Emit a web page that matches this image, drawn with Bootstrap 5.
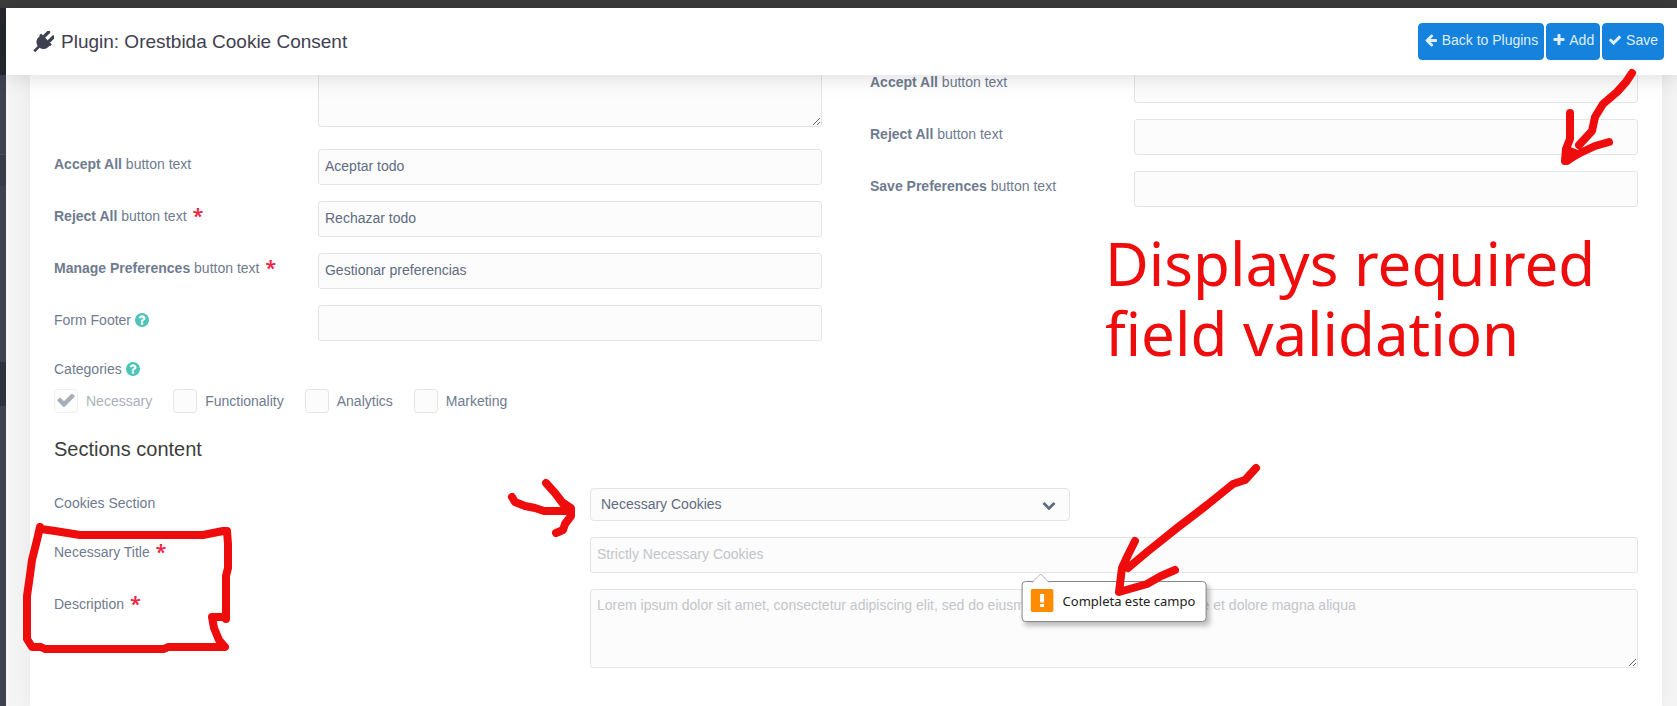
<!DOCTYPE html>
<html lang="en">
<head>
<meta charset="utf-8">
<meta name="viewport" content="width=device-width, initial-scale=1">
<title>Plugin: Orestbida Cookie Consent</title>
<link href="https://cdn.jsdelivr.net/npm/bootstrap@5.3.0/dist/css/bootstrap.min.css" rel="stylesheet">
<style>
  body { font: 14px/20px "Liberation Sans", Arial, sans-serif; color: #6f7b8f; background: #f5f5f5; }
  .top-strip { height: 8px; background: #3c3c3c; }
  .side-rail { width: 6px; background: #3f4050; }
  .rail-brand { height: 67px; background: #272730; }
  .rail-item { height: 32px; margin-top: 79px; background: #3a3b48; border-top: 1px solid #4b4c5a; }
  .rail-current { height: 44px; margin-top: 176px; background: #30313e; }
  .page-head { height: 67px; padding: 0 13px 0 27px; z-index: 2; box-shadow: 0 0 24px rgba(0,0,0,.16); }
  .page-head h1 { font-size: 19px; line-height: 24px; color: #3f4050; gap: 7px; }
  .head-actions { gap: 2px; }
  .btn-act { --bs-btn-color: #dfeefb; --bs-btn-bg: #1582de; --bs-btn-border-color: #1582de; --bs-btn-hover-color: #fff; --bs-btn-hover-bg: #0f72c5;
    --bs-btn-padding-x: 5px; --bs-btn-font-size: 14px; --bs-btn-line-height: 23px; --bs-btn-border-radius: 4px; padding-top: 5px; padding-bottom: 7px; }
  .ico { width: 14px; height: 14px; fill: currentColor; flex: none; vertical-align: -2px; }
  .panel { margin: -8px 15px 0 24px; padding: 0 24px 24px; box-shadow: 0 0 24px rgba(0,0,0,.06); }
  .stack { display: grid; row-gap: 16px; }
  .lbl { padding-top: 5px; }
  .field { font-size: 14px; line-height: 20px; height: 36px; padding: 5px 6px 7px; color: #5f6b80; background-color: #fcfcfc; border: 1px solid #e4e4e4; border-radius: 3px; }
  .field::placeholder { color: #c2c5cb; }
  .area-first { height: 60px; margin-bottom: 6px; }
  .area-desc { height: 79px; }
  .pick { width: 480px; height: 33px; padding: 4px 40px 6px 10px; border-radius: 4px; background-size: 14px 14px; background-position: right 13px center;
    background-image: url("data:image/svg+xml,%3csvg xmlns='http://www.w3.org/2000/svg' viewBox='0 0 1792 1792'%3e%3cpath fill='%23606b80' d='M1683 808l-742 741q-19 19-45 19t-45-19l-742-741q-19-19-19-45.5t19-45.5l166-165q19-19 45-19t45 19l531 531 531-531q19-19 45-19t45 19l166 165q19 19 19 45.5t-19 45.5z'/%3e%3c/svg%3e"); }
  .req { color: #ee2445; font: 600 20px/16px "Noto Sans", sans-serif; vertical-align: -2px; margin-left: 2px; }
  .hint { color: #4ec5b8; }
  .choices { gap: 21px; padding-top: 10px; }
  .tick { width: 24px; height: 24px; margin: 0; background-color: #fcfcfc; border: 1px solid #e4e4e4; }
  .tick:checked { background-color: #fcfcfc; border-color: #e4e4e4; }
  .form-check-input.tick:checked[type=checkbox] { background-size: 20px 20px; background-position: center 0;
    background-image: url("data:image/svg+xml,%3csvg xmlns='http://www.w3.org/2000/svg' viewBox='0 0 1792 1792'%3e%3cpath fill='%236f7b8f' d='M1671 566q0 40-28 68l-724 724-136 136q-28 28-68 28t-68-28l-136-136-362-362q-28-28-28-68t28-68l136-136q28-28 68-28t68 28l294 295 656-657q28-28 68-28t68 28l136 136q28 28 28 68z'/%3e%3c/svg%3e"); }
  .tick:disabled { opacity: .6; }
  .tick:disabled + label { opacity: .6; }
  .group-name { font-size: 14px; line-height: 20px; padding-top: 2px; }
  h2.sect { font-size: 20px; line-height: 24px; margin: 24px 0 27px; color: #3d3d3d; }
  .bubble { top: calc(100% + 8px); left: 50%; transform: translateX(-50%); z-index: 3; height: 41px; padding: 0 10px 2px 8px; gap: 9px; color: #222; white-space: nowrap;
    font: 13px/20px "Noto Sans", sans-serif; background: #fff; border: 1px solid #858585; border-radius: 4px; box-shadow: 3px 4px 5px rgba(0,0,0,.25); }
  .bubble-tip { left: 9px; top: -9px; width: 18px; height: 10px; }
  .marks { z-index: 5; pointer-events: none; color: #ee0c0c; }
  .marks svg { fill: none; stroke: currentColor; stroke-width: 8; stroke-linecap: round; stroke-linejoin: round; }
  .note { top: 228px; right: 68px; width: 504px; font: 60px/70px "Noto Sans", sans-serif; }
</style>
</head>
<body class="position-relative min-vh-100 d-flex flex-column overflow-hidden">
<div class="top-strip"></div>
<div class="d-flex flex-grow-1">
  <aside class="side-rail flex-shrink-0">
    <div class="rail-brand"></div><div class="rail-item"></div><div class="rail-current"></div>
  </aside>
  <div class="flex-grow-1 d-flex flex-column">
    <header class="page-head bg-white d-flex align-items-center justify-content-between position-relative">
      <h1 class="d-flex align-items-center m-0 fw-normal">
        <svg width="21" height="22" viewBox="0 0 24 24" fill="currentColor" aria-hidden="true"><g transform="rotate(45 12 12)"><rect x="6.2" y="-2" width="3.8" height="10" rx="1.9"/><rect x="14" y="-2" width="3.8" height="10" rx="1.9"/><path d="M4 7.200h16q.8 0 .8.8v1.400q0 .8-.8.8h-.2v2c0 4.200-2.800 7-6.300 7.600V27h-3v-7.200c-3.500-.6-6.300-3.400-6.300-7.600v-2H4q-.8 0-.8-.8V8q0-.8.8-.8z"/></g></svg>
        Plugin: Orestbida Cookie Consent</h1>
      <div class="head-actions d-flex">
        <button type="button" class="btn btn-act"><svg class="ico" viewBox="0 0 1792 1792"><path d="M1664 896v128q0 53-32.500 90.500t-84.500 37.500h-704l293 294q38 36 38 90t-38 90l-75 76q-37 37-90 37-52 0-91-37l-651-652q-37-37-37-90 0-52 37-91l651-650q38-38 91-38 52 0 90 38l75 74q38 38 38 91t-38 91l-293 293h704q52 0 84.500 37.500t32.500 90.500z"/></svg> Back to Plugins</button>
        <button type="button" class="btn btn-act"><svg class="ico" viewBox="0 0 1792 1792"><path d="M1600 736v192q0 40-28 68t-68 28h-416v416q0 40-28 68t-68 28h-192q-40 0-68-28t-28-68v-416h-416q-40 0-68-28t-28-68v-192q0-40 28-68t68-28h416v-416q0-40 28-68t68-28h192q40 0 68 28t28 68v416h416q40 0 68 28t28 68z"/></svg> Add</button>
        <button type="submit" form="plugin" class="btn btn-act"><svg class="ico" viewBox="0 0 1792 1792"><path d="M1671 566q0 40-28 68l-724 724-136 136q-28 28-68 28t-68-28l-136-136-362-362q-28-28-28-68t28-68l136-136q28-28 68-28t68 28l294 295 656-657q28-28 68-28t68 28l136 136q28 28 28 68z"/></svg> Save</button>
      </div>
    </header>
    <form id="plugin" class="panel bg-white flex-grow-1">
      <div class="row gx-5">
        <div class="col-6 stack">
          <div class="row"><div class="col-8 offset-4"><textarea class="form-control field area-first" aria-label="Form description"></textarea></div></div>
          <div class="row"><label class="col-4 lbl" for="l1"><b>Accept All</b> button text</label><div class="col-8"><input class="form-control field" id="l1" value="Aceptar todo"></div></div>
          <div class="row"><label class="col-4 lbl" for="l2"><b>Reject All</b> button text <span class="req">*</span></label><div class="col-8"><input class="form-control field" id="l2" value="Rechazar todo"></div></div>
          <div class="row"><label class="col-4 lbl text-nowrap" for="l3"><b>Manage Preferences</b> button text <span class="req">*</span></label><div class="col-8"><input class="form-control field" id="l3" value="Gestionar preferencias"></div></div>
          <div class="row"><label class="col-4 lbl" for="l4">Form Footer <svg class="ico hint" viewBox="128 128 1536 1536"><use href="#q"/></svg></label><div class="col-8"><input class="form-control field" id="l4"></div></div>
        </div>
        <div class="col-6">
          <div class="stack">
            <div class="row"><label class="col-4 lbl" for="r1"><b>Accept All</b> button text</label><div class="col-8"><input class="form-control field" id="r1"></div></div>
            <div class="row"><label class="col-4 lbl" for="r2"><b>Reject All</b> button text</label><div class="col-8"><input class="form-control field" id="r2"></div></div>
            <div class="row"><label class="col-4 lbl" for="r3"><b>Save Preferences</b> button text</label><div class="col-8"><input class="form-control field" id="r3"></div></div>
          </div>
        </div>
      </div>
      <fieldset class="mt-3">
        <legend class="m-0 group-name">Categories <svg class="ico hint" viewBox="128 128 1536 1536"><path id="q" d="M1024 1376v-192q0-14-9-23t-23-9h-192q-14 0-23 9t-9 23v192q0 14 9 23t23 9h192q14 0 23-9t9-23zm256-672q0-88-55.500-163t-138.500-116-170-41q-243 0-371 213-15 24 8 42l132 100q7 6 19 6 16 0 25-12 53-68 86-92 34-24 86-24 48 0 85.500 26t37.500 59q0 38-20 61t-68 45q-63 28-115.500 86.500t-52.500 125.500v36q0 14 9 23t23 9h192q14 0 23-9t9-23q0-19 21.500-49.500t54.500-49.500q32-18 49-28.500t46-35 44.500-48 28-60.500 12.500-81zm384 192q0 209-103 385.500t-279.500 279.500-385.500 103-385.500-103-279.500-279.500-103-385.500 103-385.500 279.500-279.500 385.500-103 385.500 103 279.500 279.500 103 385.500z"/></svg></legend>
        <div class="choices d-flex flex-wrap">
          <div class="d-flex align-items-center gap-2"><input type="checkbox" class="form-check-input tick" id="c1" checked disabled><label for="c1">Necessary</label></div>
          <div class="d-flex align-items-center gap-2"><input type="checkbox" class="form-check-input tick" id="c2"><label for="c2">Functionality</label></div>
          <div class="d-flex align-items-center gap-2"><input type="checkbox" class="form-check-input tick" id="c3"><label for="c3">Analytics</label></div>
          <div class="d-flex align-items-center gap-2"><input type="checkbox" class="form-check-input tick" id="c4"><label for="c4">Marketing</label></div>
        </div>
      </fieldset>
      <h2 class="sect fw-normal">Sections content</h2>
      <div class="stack">
        <div class="row"><label class="col-4 lbl" for="s1">Cookies Section</label><div class="col-8"><select class="form-select field pick" id="s1"><option>Necessary Cookies</option></select></div></div>
        <div class="row"><label class="col-4 lbl" for="s2">Necessary Title <span class="req">*</span></label><div class="col-8"><div class="position-relative">
          <input class="form-control field" id="s2" placeholder="Strictly Necessary Cookies" aria-describedby="need">
          <div class="bubble position-absolute d-flex align-items-center" id="need" role="tooltip">
            <svg class="bubble-tip position-absolute" viewBox="0 0 18 10" aria-hidden="true"><path d="M0 10 9 1l9 9" fill="#fff" stroke="#b0b0b0"/></svg>
            <svg width="23" height="23" viewBox="0 0 23 23" aria-hidden="true"><rect width="23" height="23" rx="2" fill="#ff8c00"/><path d="M9.500 5h4v8.500h-4zM9.500 15h4v3h-4z" fill="#fff"/></svg>
            <span>Completa este campo</span>
          </div></div></div></div>
        <div class="row"><label class="col-4 lbl" for="s3">Description <span class="req">*</span></label><div class="col-8"><textarea class="form-control field area-desc" id="s3" placeholder="Lorem ipsum dolor sit amet, consectetur adipiscing elit, sed do eiusmod tempor incididunt ut labore et dolore magna aliqua"></textarea></div></div>
      </div>
    </form>
  </div>
</div>
<!-- Freehand review marks drawn over the form -->
<div class="marks position-absolute top-0 start-0 w-100 h-100">
  <svg class="d-block w-100 h-100" aria-hidden="true">
    <path d="M1632 73l-6 9-9 10-14 12-8 13-3 14-13 14M1570 113v26l-4 10-1 12 15-8 15-7 14-4"/>
    <path d="M1567 150v11l10-7z"/>
    <path d="M41 529l14 2 25 4h123l20-4h4l1 13v24l-2 8v43M226 617h-14l2 11 5 12 6 7h-57l-4 2H45l-4-2H32l-5-8v-43l3-21 2-15 5-20 3-13"/>
    <path d="M512 497l3 5 10 4 10 2 9 3h27M546 483l9 10 7 9 9 6v8l-6 8-2 6-7 3M555 493l15 20"/>
    <path d="M1256 468l-11 12-12 4-26 21-30 23-30 24-19 16M1135 541l-7 14-6 13-3 24 14-4 14-4 14-8 14-6"/>
  </svg>
  <div class="note position-absolute">Displays required field validation</div>
</div>
<script src="https://cdn.jsdelivr.net/npm/bootstrap@5.3.0/dist/js/bootstrap.bundle.min.js"></script>
</body>
</html>
